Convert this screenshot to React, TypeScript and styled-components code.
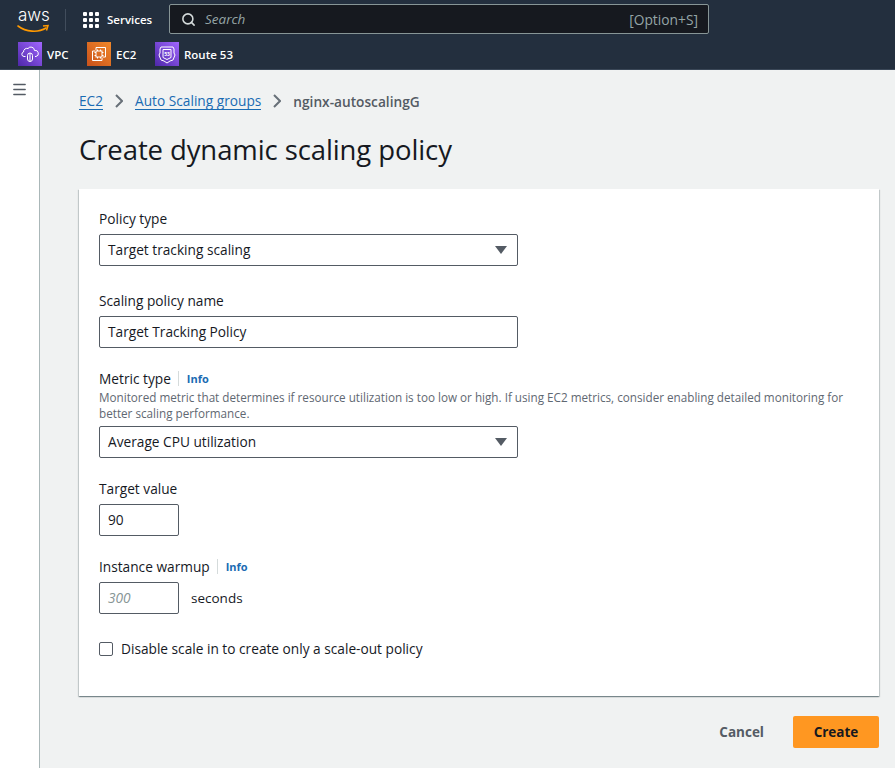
import React from "react";
import styled, { createGlobalStyle } from "styled-components";
import { Menu, Search } from "lucide-react";

const GlobalStyle = createGlobalStyle`
  html, body {
    margin: 0;
    padding: 0;
    height: 768px;
    overflow: hidden;
    background: #f0f2f2;
    font-family: "Open Sans", "Noto Sans", sans-serif;
    color: #16191f;
  }
  * { box-sizing: border-box; }
`;

const Page = styled.div`
  display: flex;
  flex-direction: column;
  height: 768px;
`;

const Header = styled.header`
  height: 70px;
  background: #232f3e;
  border-bottom: 1px solid #3a4757;
  padding: 0 18px;
  flex: none;
`;

const TopRow = styled.div`
  display: flex;
  align-items: center;
  height: 39px;
`;

const Logo = styled.div`
  position: relative;
  width: 31px;
  height: 30px;
  color: #fff;
  font-size: 17px;
  line-height: 20px;
  font-family: "Inter", sans-serif;
  font-weight: 300;
  letter-spacing: -0.1px;
  & svg { position: absolute; left: -1px; top: 19px; }
`;

const Divider = styled.span`
  width: 1px;
  height: 22px;
  background: #414d5c;
  margin: 0 17px 0 16px;
`;

const ServicesButton = styled.div`
  display: flex;
  align-items: center;
  gap: 8px;
  color: #fff;
  font-size: 11.5px;
  font-weight: 600;
  width: 86px;
`;

const GridDots = styled.div`
  display: grid;
  grid-template-columns: repeat(3, 4px);
  grid-auto-rows: 4px;
  gap: 2px;
  & i { background: #fff; border-radius: 1px; }
`;

const SearchBox = styled.div`
  display: flex;
  align-items: center;
  width: 540px;
  height: 30px;
  margin-top: -1px;
  padding: 0 10px 0 11px;
  background: #16191f;
  border: 1px solid #879596;
  border-radius: 2px;
  color: #95a5a6;
  font-size: 13px;
  & svg { color: #d5dbdb; }
`;

const SearchHint = styled.em`
  margin-left: 9px;
  flex: 1;
  font-size: 13.5px;
`;

const Shortcut = styled.span`
  font-size: 13.8px;
`;

const FavRow = styled.div`
  display: flex;
  align-items: center;
  height: 30px;
`;

const Fav = styled.div<{ $width: number }>`
  display: flex;
  align-items: center;
  gap: 5px;
  width: ${(p) => p.$width}px;
  color: #fff;
  font-size: 11.5px;
  font-weight: 600;
`;

const ServiceIcon = styled.span<{ $from: string; $to: string }>`
  display: flex;
  align-items: center;
  justify-content: center;
  width: 24px;
  height: 24px;
  background: linear-gradient(45deg, ${(p) => p.$from}, ${(p) => p.$to});
`;

const Body = styled.div`
  display: flex;
  flex: 1;
  min-height: 0;
`;

const Sidebar = styled.aside`
  width: 40px;
  flex: none;
  background: #fff;
  border-right: 1px solid #aab7b8;
  padding: 11px 0 0 11px;
  color: #545b64;
`;

const Main = styled.main`
  flex: 1;
  padding: 21px 16px 0 39px;
`;

const Breadcrumbs = styled.nav`
  display: flex;
  align-items: center;
  height: 20px;
  font-size: 13.7px;
  color: #545b64;
  & svg { margin: 0 12px; }
`;

const Crumb = styled.a`
  color: #1a6bb3;
  border-bottom: 1px solid #1a6bb3;
  line-height: 17px;
`;

const CurrentCrumb = styled.span`
  font-weight: 600;
`;

const Title = styled.h1`
  margin: 21px 0 21px;
  font-size: 27.5px;
  line-height: 36px;
  font-weight: 400;
  letter-spacing: -0.1px;
`;

const Card = styled.section`
  height: 507px;
  padding: 20px;
  background: #fff;
  box-shadow: 0 1px 1px 0 rgba(0, 28, 36, 0.3), 1px 1px 1px 0 rgba(0, 28, 36, 0.15),
    -1px 1px 1px 0 rgba(0, 28, 36, 0.15);
`;

const Field = styled.div<{ $top?: number }>`
  margin-top: ${(p) => p.$top ?? 21}px;
`;

const LabelRow = styled.div`
  display: flex;
  align-items: center;
  height: 20px;
  padding-bottom: 2px;
`;

const Label = styled.label`
  font-size: 13.7px;
`;

const InfoLink = styled.a`
  margin-left: 7px;
  padding-left: 8px;
  border-left: 1px solid #d5dbdb;
  color: #1a6bb3;
  font-size: 11px;
  font-weight: 700;
  line-height: 15px;
`;

const Description = styled.p`
  margin: 0;
  max-width: 760px;
  font-size: 11.7px;
  line-height: 16px;
  color: #5f6872;
`;

const Control = styled.div<{ $width: number; $placeholder?: boolean }>`
  position: relative;
  display: flex;
  align-items: center;
  width: ${(p) => p.$width}px;
  height: 32px;
  margin-top: 5px;
  padding: 0 8px 2px;
  background: #fff;
  border: 1px solid #545b64;
  border-radius: 2px;
  font-size: 13.7px;
  font-style: ${(p) => (p.$placeholder ? "italic" : "normal")};
  color: ${(p) => (p.$placeholder ? "#879596" : "#16191f")};
`;

const Caret = styled.span`
  position: absolute;
  right: 10px;
  top: 11px;
  border-left: 6px solid transparent;
  border-right: 6px solid transparent;
  border-top: 8px solid #545b64;
`;

const InlineRow = styled.div`
  display: flex;
  align-items: center;
  gap: 12px;
  font-size: 13.5px;
  & > span { margin-top: 5px; }
`;

const CheckRow = styled.label`
  display: flex;
  align-items: center;
  gap: 8px;
  height: 20px;
  margin-top: 25px;
  font-size: 13.7px;
`;

const CheckText = styled.span`
  margin-top: -2px;
`;

const CheckBox = styled.span`
  width: 14px;
  height: 14px;
  background: #fff;
  border: 1px solid #545b64;
  border-radius: 2px;
`;

const Actions = styled.div`
  display: flex;
  justify-content: flex-end;
  align-items: center;
  margin-top: 20px;
  gap: 29px;
`;

const CancelButton = styled.button`
  padding: 0;
  border: 0;
  background: none;
  color: #545b64;
  font: 700 13.5px "Open Sans", sans-serif;
`;

const CreateButton = styled.button`
  width: 86px;
  height: 32px;
  border: 0;
  border-radius: 2px;
  background: #ff9721;
  color: #16191f;
  font: 700 13.5px "Open Sans", sans-serif;
`;

const stroke = { fill: "none", stroke: "#fff", strokeWidth: 1 };

const CrumbArrow = () => (
  <svg width="8" height="14" viewBox="0 0 8 14" fill="none" stroke="#687078" strokeWidth="2">
    <path d="M1 1l6 6-6 6" />
  </svg>
);

export default function App() {
  return (
    <Page>
      <GlobalStyle />
      <Header>
        <TopRow>
          <Logo>
            aws
            <svg width="33" height="10" viewBox="0 0 33 10">
              <path d="M1 2c8 6 20 7 28 2" fill="none" stroke="#ff9900" strokeWidth="1.6" strokeLinecap="round" />
              <path d="M26 2l5-.5-1.5 5" fill="none" stroke="#ff9900" strokeWidth="1.5" />
            </svg>
          </Logo>
          <Divider />
          <ServicesButton>
            <GridDots>
              {Array.from({ length: 9 }, (_, i) => (
                <i key={i} />
              ))}
            </GridDots>
            Services
          </ServicesButton>
          <SearchBox>
            <Search size={15} strokeWidth={2.5} />
            <SearchHint>Search</SearchHint>
            <Shortcut>[Option+S]</Shortcut>
          </SearchBox>
        </TopRow>
        <FavRow>
          <Fav $width={69}>
            <ServiceIcon $from="#4d27a8" $to="#a166ff">
              <svg width="18" height="18" viewBox="0 0 18 18" {...stroke}>
                <path d="M4.5 11.5H3a2.3 2.3 0 0 1-.5-4.5A3.5 3.5 0 0 1 7 3.5a3.6 3.6 0 0 1 6.5 2 3 3 0 0 1 1.5 6h-1" />
                <rect x="6.5" y="8" width="5" height="8.5" rx="2.5" />
                <path d="M9 8v8.5" />
              </svg>
            </ServiceIcon>
            VPC
          </Fav>
          <Fav $width={68}>
            <ServiceIcon $from="#c8511b" $to="#f0882a">
              <svg width="18" height="18" viewBox="0 0 18 18" {...stroke}>
                <path d="M6 5V2.5h9.5V12H13" />
                <path d="M5 6H2.5v9.5H12V13" />
                <rect x="6" y="6" width="6" height="6" />
                <path d="M7.5 4.5V6M10.5 4.5V6M7.5 12v1.5M10.5 12v1.5M4.5 7.5H6M4.5 10.5H6M12 7.5h1.5M12 10.5h1.5" />
              </svg>
            </ServiceIcon>
            EC2
          </Fav>
          <Fav $width={90}>
            <ServiceIcon $from="#4d27a8" $to="#a166ff">
              <svg width="20" height="20" viewBox="0 0 20 20" {...stroke}>
                <path d="M4 3h12l1 2v4l1 2-2 5-3 1-3 2-3-2-3-1-2-5 1-2V5z" />
                <path d="M6 5.5h8v8l-4 2-4-2z" />
                <text x="10" y="11.5" textAnchor="middle" fontSize="5" fontWeight="700" fill="#fff" stroke="none">
                  53
                </text>
              </svg>
            </ServiceIcon>
            Route 53
          </Fav>
        </FavRow>
      </Header>
      <Body>
        <Sidebar>
          <Menu size={17} strokeWidth={2} />
        </Sidebar>
        <Main>
          <Breadcrumbs>
            <Crumb>EC2</Crumb>
            <CrumbArrow />
            <Crumb>Auto Scaling groups</Crumb>
            <CrumbArrow />
            <CurrentCrumb>nginx-autoscalingG</CurrentCrumb>
          </Breadcrumbs>
          <Title>Create dynamic scaling policy</Title>
          <Card>
            <Field $top={0}>
              <LabelRow>
                <Label>Policy type</Label>
              </LabelRow>
              <Control $width={419}>
                Target tracking scaling
                <Caret />
              </Control>
            </Field>
            <Field $top={25}>
              <LabelRow>
                <Label>Scaling policy name</Label>
              </LabelRow>
              <Control $width={419}>Target Tracking Policy</Control>
            </Field>
            <Field>
              <LabelRow>
                <Label>Metric type</Label>
                <InfoLink>Info</InfoLink>
              </LabelRow>
              <Description>
                Monitored metric that determines if resource utilization is too low or high. If using EC2 metrics,
                consider enabling detailed monitoring for better scaling performance.
              </Description>
              <Control $width={419}>
                Average CPU utilization
                <Caret />
              </Control>
            </Field>
            <Field>
              <LabelRow>
                <Label>Target value</Label>
              </LabelRow>
              <Control $width={80}>90</Control>
            </Field>
            <Field>
              <LabelRow>
                <Label>Instance warmup</Label>
                <InfoLink>Info</InfoLink>
              </LabelRow>
              <InlineRow>
                <Control $width={80} $placeholder>
                  300
                </Control>
                <span>seconds</span>
              </InlineRow>
            </Field>
            <CheckRow>
              <CheckBox />
              <CheckText>Disable scale in to create only a scale-out policy</CheckText>
            </CheckRow>
          </Card>
          <Actions>
            <CancelButton>Cancel</CancelButton>
            <CreateButton>Create</CreateButton>
          </Actions>
        </Main>
      </Body>
    </Page>
  );
}
